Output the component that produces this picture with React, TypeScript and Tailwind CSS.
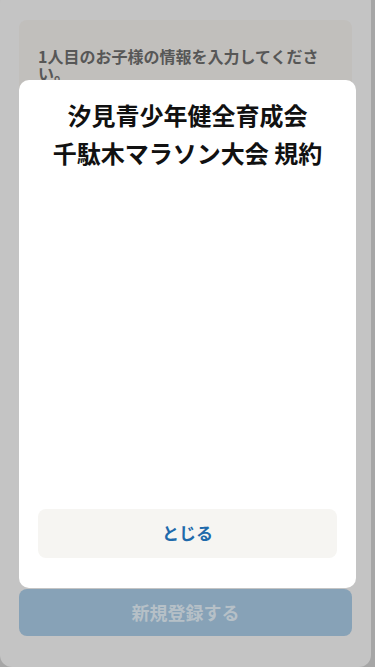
const jp = { fontFamily: '"Noto Sans CJK JP", "Noto Sans", sans-serif' };

export default function App() {
  return (
    <div className="relative h-[667px] w-[375px] overflow-hidden bg-[#a6a6a6]" style={jp}>
      <div className="flex h-[667px] w-[371px] flex-col">
        <div className="-mt-[16px] h-[21px] shrink-0 bg-[#c2c2c2] px-[14px] text-[18px] font-bold leading-[21px] text-[#4a4a4a]">
          お子様の登録
        </div>
        <div className="-mt-[12px] flex flex-1 flex-col rounded-[12px] bg-[#c4c4c4] px-[19px] pb-[31px] pt-[27px]">
          <div className="flex-1 rounded-[8px] bg-[#c1bfbc] pl-[19px] pr-[24px] pt-[28px]">
            <p className="text-[16px] font-bold leading-[17px] text-[#575757]">
              1人目のお子様の情報を入力してください。
            </p>
          </div>
          <button className="mt-[96px] h-[47px] w-full rounded-[8px] bg-[#87a2b7] text-[18px] font-bold text-[#b6c0c7]">
            新規登録する
          </button>
        </div>
      </div>

      <div className="fixed inset-0 flex items-center justify-center">
        <div className="flex h-[508px] w-[337px] flex-col rounded-[10px] bg-white">
          <h2 className="pt-[16px] text-center text-[24px] font-bold leading-[38px] text-[#111]">
            汐見青少年健全育成会
            <br />
            千駄木マラソン大会 規約
          </h2>
          <button className="mx-[19px] mb-[30px] mt-auto h-[49px] rounded-[8px] bg-[#f6f5f2] text-[17px] font-bold text-[#1f6aab]">
            とじる
          </button>
        </div>
      </div>
    </div>
  );
}
